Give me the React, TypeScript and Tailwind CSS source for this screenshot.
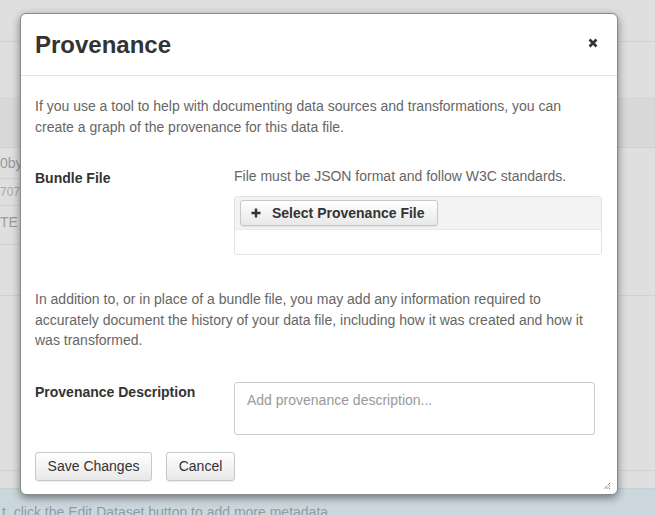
export default function App() {
  return (
    <div className="relative w-[655px] h-[515px] overflow-hidden bg-[#dfdfdf] font-['Liberation_Sans',Arial,sans-serif]">
      {/* background page under backdrop */}
      <div className="flex flex-col">
        <div className="h-[42px] border-b border-[#d2d2d2]" />
        <div className="h-[55px]" />
        <div className="h-[51px] bg-[#d8d8d8] border-b border-[#d0d0d0]" />
        <div className="h-[148px] border-b border-[#d2d2d2]">
          <div className="w-[300px] flex flex-col text-[14px] text-[#9a9a9a]">
            <div className="h-[31px] border-b border-[#d2d2d2] flex items-center">0by</div>
            <div className="h-[27px] border-b border-[#d2d2d2] flex items-center text-[12px] text-[#a8a8a8]">707</div>
            <div className="h-[39px] border-b border-[#d2d2d2] flex items-start pt-[6px] text-[#9a9a9a]">TE</div>
          </div>
        </div>
        <div className="h-[175px] border-b border-[#d2d2d2]" />
        <div className="h-[17px]" />
        <div className="h-[30px] bg-[#ccd7dd] border-t border-[#c5d2d9] text-[14px] text-[#8f9ba2] leading-[20px] pt-[13px] pl-[2px] whitespace-nowrap">
          t, click the Edit Dataset button to add more metadata
        </div>
      </div>

      {/* modal */}
      <div className="absolute top-[13px] left-[20px] w-[598px] h-[482px] bg-white rounded-[6px] border border-[#8a8a8a] shadow-[0_3px_9px_rgba(0,0,0,0.45)] flex flex-col">
        <div className="h-[62px] border-b border-[#e5e5e5] flex items-center justify-between pl-[14px] pr-[19px]">
          <h1 className="text-[24px] font-bold text-[#333] leading-[28px]">Provenance</h1>
          <svg width="10" height="10" viewBox="0 0 10 10" className="mt-[-3px]">
            <path d="M1.5 1.5 L8.5 8.5 M8.5 1.5 L1.5 8.5" stroke="#333" strokeWidth="2.6" strokeLinecap="butt" />
          </svg>
        </div>
        <div className="px-[14px] pt-[20px] text-[14px] leading-[20.5px] text-[#666]">
          <p>
            If you use a tool to help with documenting data sources and transformations, you can create a graph of the provenance for this data file.
          </p>
          <div className="flex mt-[29px]">
            <div className="w-[199px] pt-[2px] font-bold text-[#333]">Bundle File</div>
            <div className="w-[368px] flex flex-col">
              <div className="leading-[20px]">File must be JSON format and follow W3C standards.</div>
              <div className="mt-[10px] h-[59px] border border-[#e3e3e3] rounded-[3px] flex flex-col overflow-hidden">
                <div className="h-[33px] bg-[#f3f3f3] border-b border-[#e8e8e8] pl-[5px] pt-[3px]">
                  <div className="w-[198px] h-[26px] border border-[#c8c8c8] rounded-[3px] bg-gradient-to-b from-white to-[#e8e8e8] shadow-[0_1px_1px_rgba(0,0,0,0.08)] flex items-center pl-[10px] font-bold text-[#333]">
                    <svg width="10" height="10" viewBox="0 0 10 10" className="mr-[11px]">
                      <path d="M5 0.5 V9.5 M0.5 5 H9.5" stroke="#333" strokeWidth="2.4" />
                    </svg>
                    Select Provenance File
                  </div>
                </div>
                <div className="flex-1 bg-white" />
              </div>
            </div>
          </div>
          <p className="mt-[34px]">
            In addition to, or in place of a bundle file, you may add any information required to accurately document the history of your data file, including how it was created and how it was transformed.
          </p>
          <div className="flex mt-[31px]">
            <div className="w-[199px] font-bold text-[#333]">Provenance Description</div>
            <div className="w-[361px] h-[53px] border border-[#cccccc] rounded-[3px] px-[12px] pt-[7px] text-[#999]">
              Add provenance description...
            </div>
          </div>
          <div className="flex gap-[14px] mt-[17px]">
            <div className="w-[117px] h-[29px] border border-[#c8c8c8] rounded-[3px] bg-gradient-to-b from-white to-[#e8e8e8] shadow-[0_1px_1px_rgba(0,0,0,0.08)] flex items-center justify-center text-[#333]">
              Save Changes
            </div>
            <div className="w-[69px] h-[29px] border border-[#c8c8c8] rounded-[3px] bg-gradient-to-b from-white to-[#e8e8e8] shadow-[0_1px_1px_rgba(0,0,0,0.08)] flex items-center justify-center text-[#333]">
              Cancel
            </div>
          </div>
        </div>
        <svg width="8" height="8" viewBox="0 0 8 8" className="absolute right-[6px] bottom-[4px]">
          <path d="M7 1 L1 7 M7 3.5 L3.5 7 M7 6 L6 7" stroke="#444" strokeWidth="1" strokeDasharray="1 1" />
        </svg>
      </div>
    </div>
  );
}
